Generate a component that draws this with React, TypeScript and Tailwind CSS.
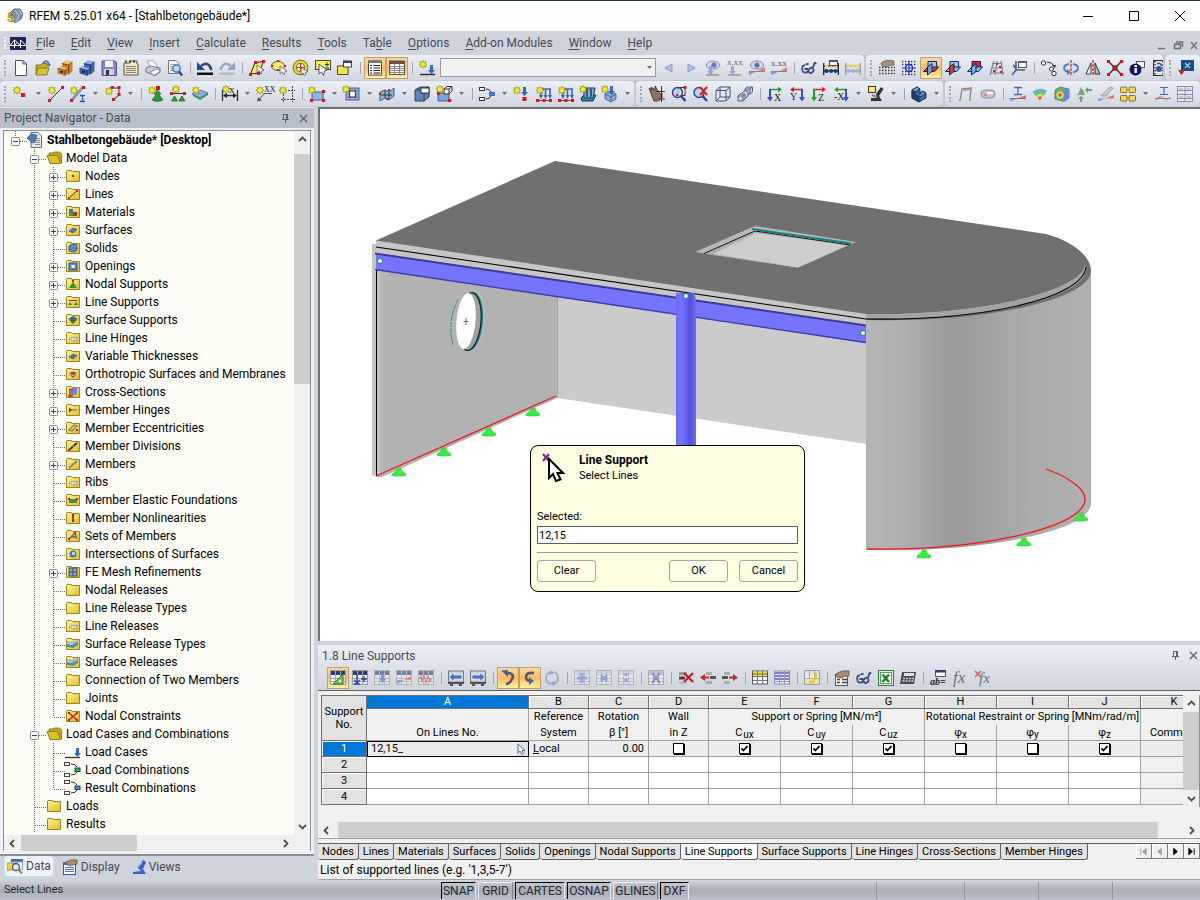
import { ReactNode } from "react";
import clsx from "clsx";

const UI = "font-['Roboto','Noto_Sans',sans-serif]";

/* ---------- icon primitives, all on a 16x16 grid ---------- */

interface LineProps {
  d: string;
  c?: string;
  w?: number;
  f?: string;
}
const L = ({ d, c = "#303030", w = 1, f = "none" }: LineProps) => (
  <path d={d} stroke={c} strokeWidth={w} fill={f} />
);

interface BoxProps {
  x: number;
  y: number;
  w?: number;
  h?: number;
  f?: string;
  c?: string;
}
const B = ({ x, y, w = 3, h, f = "#e0101c", c = "none" }: BoxProps) => (
  <rect x={x} y={y} width={w} height={h ?? w} fill={f} stroke={c} />
);

const Spark = ({ x = 0, y = 0 }: { x?: number; y?: number }) => (
  <g transform={`translate(${x} ${y})`}>
    <path
      d="M4 0.3 4.9 2.3 7 1.4 6.1 3.4 8 4.3 6 5.1 7 7.3 4.8 6.3 4 8.3 3.1 6.3 1 7.3 1.9 5.1 0 4.3 1.9 3.4 1 1.4 3.1 2.3Z"
      fill="#f8ee20"
      stroke="#8c8410"
      strokeWidth="0.6"
    />
  </g>
);

const Txt = ({
  x,
  y,
  s = 8,
  c = "#222",
  children,
}: {
  x: number;
  y: number;
  s?: number;
  c?: string;
  children: ReactNode;
}) => (
  <text x={x} y={y} fontSize={s} fill={c} fontFamily="Liberation Serif, serif">
    {children}
  </text>
);

const DownArrow = ({ x, y, c = "#3a66c8" }: { x: number; y: number; c?: string }) => (
  <path d={`M${x - 1} ${y}h3v5h2l-3.5 4-3.5-4h2z`} fill={c} />
);

const Glasses = ({ c = "#3c4a80" }: { c?: string }) => (
  <g>
    <L d="M4 5.5Q1 5 1.2 9T5 12.5Q8 12 7 8.5M3.5 9H7M8 11Q8 14 11 12.5T11.5 8Q9 7 8 10M11 8Q13 7 13 4Q14 2 15 4M5 5Q6 3 7.5 4.5" c={c} w={1.8} />
  </g>
);

const Sheet = ({ head = "#2c3f78" }: { head?: string }) => (
  <g>
    <B x={0.5} y={0.5} w={15} h={14} f="#eee" c="#9a9a9a" />
    <B x={1} y={1} w={14} h={4} f={head} />
    <L d="M1 8.5h14M1 11.5h14M5.5 1v13M10.5 1v13" c="#a8a8a8" />
  </g>
);

const Cabinet = ({ a, b, c }: { a: string; b: string; c: string }) => (
  <g>
    <path d="M5 3.5 9 0.5 15.5 2V11L12 14.500 5 12Z" fill={b} />
    <path d="M5 3.5 9 0.5 15.5 2 11.5 5Z" fill={a} />
    <path d="M0.5 8.500 4 6.5 11.5 8.5V14L7.5 15.8 0.5 13.500Z" fill={b} />
    <path d="M0.5 8.500 4 6.5 11.5 8.500 8 10.500Z" fill={a} />
    <L d="M0.5 8.500 8 10.500V15.5M5 3.5 11.500 5V8M11.500 5 15.5 2M8 10.500 11.500 8.500V13.500" c={c} w={0.9} />
    <B x={3} y={11} w={3} h={1.8} f="#222" />
  </g>
);

const Planes = ({ hot }: { hot: number }) => (
  <g stroke="#14206a" strokeWidth="1">
    <path d="M5 1.5H13.5V9.5H5Z" fill={hot === 2 ? "#e82018" : "#9cccf0"} />
    <path d="M0.5 11.5 5 7H15.5L11.5 11.5Z" fill={hot === 0 ? "#e03020" : "#8cc4ec"} />
    <path d="M4.5 7 9 3.5V11.5L4.5 15Z" fill={hot === 1 ? "#e03020" : "#6cb0e4"} fillOpacity="0.9" />
  </g>
);

const Abacus = ({ beads, frame }: { beads: string; frame: string }) => (
  <g>
    <L d="M0.7 3V15M15.3 3V15M1 6H15M1 11H15" c={frame} w={1.3} />
    {[3.5, 8, 12.5].map((x) => (
      <circle key={x} cx={x} cy={11} r={2.1} fill={beads} />
    ))}
    {[3.5, 8, 12.5].map((x) => (
      <circle key={x} cx={x} cy={6} r={1.9} fill="#e8d878" />
    ))}
  </g>
);

const Axis = ({ label, h, v, flip }: { label: string; h: string; v: string; flip?: boolean }) => (
  <g>
    {flip ? (
      <g>
        <L d="M4 3.5H14" c={h} w={1.6} />
        <path d="M1 3.5 5 .8V6.2Z" fill={h} />
        <L d="M13 3V12" c={v} w={2} />
        <path d="M10 11H16L13 15.5Z" fill={v} />
        <Txt x={1} y={13.5} s={10}>{label}</Txt>
      </g>
    ) : (
      <g>
        <L d="M2 3.5H11" c={h} w={1.6} />
        <path d="M15 3.5 11 .8V6.2Z" fill={h} />
        <L d="M3 3V12" c={v} w={2} />
        <path d="M0 11H6L3 15.5Z" fill={v} />
        <Txt x={7} y={14.5} s={10}>{label}</Txt>
      </g>
    )}
  </g>
);

const LoadFrame = () => (
  <g>
    <L d="M6 3H15M5 3V10M9.5 3V10M14 3V10" c="#3a66c8" w={1.6} />
    <path d="M3 9h4l-2 4zM7.5 9h4l-2 4zM12 9h4l-2 4z" fill="#3a66c8" />
    <L d="M1 14.5H15" c="#555" />
    <B x={0} y={13} />
    <B x={6.5} y={13} />
    <B x={13} y={13} />
    <Spark />
  </g>
);

const Panel4 = ({ f }: { f: string }) => (
  <g fill={f} stroke="#6a5a08" strokeWidth="0.8">
    <rect x="0.5" y="1" width="6.5" height="5.5" rx="1" />
    <rect x="9" y="1" width="6.5" height="5.5" rx="1" />
    <rect x="0.5" y="9.5" width="6.5" height="5.5" rx="1" />
    <rect x="9" y="9.5" width="6.5" height="5.5" rx="1" />
  </g>
);

const icons: Record<string, ReactNode> = {
  page: <path d="M2.5.5H10L13.5 4V15.5H2.5ZM10 .5V4H13.5" fill="#fff" stroke="#50525a" />,
  open: (
    <g>
      <path d="M1 5H6L7 3.5H12V14H1Z" fill="#c8b020" stroke="#7a6a10" strokeWidth=".8" />
      <path d="M3 8H14L12 15H1Z" fill="#d8c438" stroke="#7a6a10" strokeWidth=".8" />
      <L d="M8 3Q12 -1 14 4" c="#4a78b8" w={1.8} />
      <path d="M11.5 4H16L14 7Z" fill="#4a78b8" />
    </g>
  ),
  cabinet: <Cabinet a="#f0c070" b="#c88030" c="#6a3c08" />,
  cabinetBlue: <Cabinet a="#90b0e8" b="#3c64b0" c="#182c60" />,
  save: (
    <g>
      <path d="M1 1H14L15.5 2.5V15.5H1Z" fill="#8484cc" stroke="#5050a0" />
      <B x={4} y={1} w={8} h={6} f="#f4f4fa" />
      <B x={3} y={9} w={10} h={6} f="#cfcfd8" />
      <B x={5} y={10} w={3} h={5} f="#333" />
    </g>
  ),
  notes: (
    <g>
      <path d="M1 3H7V1H14V4H15V15H1Z" fill="#f0e8c8" stroke="#5a5240" />
      <L d="M3 6.5H13M3 8.5H13M3 10.5H13M3 12.5H13" c="#8a8270" />
      <path d="M2 1.5h2M6 1.5h2M10 1.5h2" stroke="#444" strokeWidth="2" />
    </g>
  ),
  print: (
    <g>
      <path d="M2 1 8 0.5 13 7 6 8Z" fill="#fff" stroke="#888" strokeWidth=".7" />
      <path d="M1 8 5 6 15 8V12L10 15.5 1 12Z" fill="#c4cade" stroke="#5a6070" strokeWidth=".8" />
      <path d="M5 12 12 9 15.5 11 9 15.5Z" fill="#fff" stroke="#7078a0" strokeWidth=".8" />
    </g>
  ),
  preview: (
    <g>
      <path d="M1.5.5H9L12 3.5V13.5H1.5Z" fill="#f6f6f6" stroke="#777" />
      <L d="M3 4.5h6M3 6.5h5M3 8.5h4M3 10.5h4" c="#aaa" />
      <circle cx="9.5" cy="8.5" r="3.7" fill="#b8d8f8" stroke="#4468a8" strokeWidth="1.3" />
      <L d="M12 11.5 15 15.5" c="#2c4c98" w={2.4} />
    </g>
  ),
  undo: (
    <g>
      <L d="M4 6Q11 0 14.5 10" c="#284878" w={2.6} />
      <path d="M0 2V10H8Z" fill="#284878" />
      <B x={0} y={12.5} w={16} h={2.5} f="#101010" />
    </g>
  ),
  redo: (
    <g>
      <L d="M12 6Q5 0 1.5 10" c="#98a4bc" w={2.4} />
      <path d="M16 2V10H8Z" fill="#98a4bc" />
      <B x={0} y={12.5} w={16} h={2.5} f="#b4bac8" />
    </g>
  ),
  selPlane: (
    <g>
      <L d="M1.5 14 6 2.500 14.5 1.5 10 13Z" c="#222" f="#f8e858" />
      <B x={5} y={1} /><B x={13} y={0} /><B x={0} y={13} /><B x={8} y={12} />
      <path d="M8 5V13L10 11 12 14 13 10.5 15 10Z" fill="#fff" stroke="#444" strokeWidth=".7" />
    </g>
  ),
  selEllipse: (
    <g>
      <ellipse cx="7" cy="6" rx="6.5" ry="4.5" fill="#f8ec70" stroke="#554" />
      <B x={6} y={0} w={2} /><B x={0} y={5} w={2} /><B x={6} y={9} w={2} /><B x={13} y={5} w={2} />
      <path d="M9 6V14L11 12 13 15 14 11.5 16 11Z" fill="#eee" stroke="#555" strokeWidth=".7" />
    </g>
  ),
  selRing: (
    <g>
      <circle cx="7.5" cy="7.5" r="6" fill="none" stroke="#f0d800" strokeWidth="2.6" />
      <circle cx="7.5" cy="7.5" r="7.4" fill="none" stroke="#554a00" strokeWidth=".8" />
      <circle cx="7.5" cy="7.5" r="4.2" fill="#fff" stroke="#443c00" strokeWidth=".8" />
      <L d="M7.500 4V11M4 7.5H11" c="#e02020" />
      <path d="M8 8V15L10 13 12 15.500 13 12 15 11.5Z" fill="#eee" stroke="#555" strokeWidth=".7" />
    </g>
  ),
  selRect: (
    <g>
      <B x={0.5} y={0.5} w={15} h={9} f="#f8ec60" c="#444" />
      <L d="M10 4.5h4M12 2.5v4M10 8h4" />
      <path d="M4 4V14L6.5 12 8.5 15.5 9.5 11 12 10Z" fill="#fff" stroke="#333" strokeWidth=".8" />
    </g>
  ),
  window: (
    <g>
      <path d="M0.5 6H5L6 5H11V14.5H0.5Z" fill="#f4e448" stroke="#444" />
      <B x={6.5} y={1} w={8} h={6} f="#fff" c="#30406a" />
      <B x={7} y={1} w={8} h={2} f="#30406a" />
    </g>
  ),
  list: (
    <g>
      <B x={1.5} y={1} w={13} h={14} f="#fff" c="#444" />
      <B x={1} y={0.5} w={14} h={2.5} f="#777" />
      <L d="M3 5.5h2M3 8h2M3 10.5h2M3 13h2M6.5 5.5h6.5M6.5 8h6.5M6.5 10.5h6.5M6.5 13h6.5" c="#222" w={1.2} />
    </g>
  ),
  table: (
    <g>
      <B x={0.5} y={1} w={15} h={13.5} f="#fff" c="#555" />
      <B x={0.5} y={1} w={15} h={3} f="#6a5040" />
      <L d="M1 6.5h14M1 8.5h14M1 10.5h14M1 12.5h14M5.5 4v10M10.5 4v10" c="#8a8a8a" />
    </g>
  ),
  newLoad: (
    <g>
      <Spark />
      <DownArrow x={12} y={5} />
      <L d="M1 14.5H16" w={1.6} />
    </g>
  ),
  prev: <path d="M11 4V12L4 8Z" fill="#b0c0ec" stroke="#8498cc" />,
  next: <path d="M5 4V12L12 8Z" fill="#b0c0ec" stroke="#8498cc" />,
  showLoads: (
    <g>
      <ellipse cx="8" cy="5" rx="6.5" ry="4" fill="#d8dcea" stroke="#8088a8" />
      <circle cx="9" cy="5" r="2.6" fill="#6878b8" />
      <DownArrow x={5} y={6} c="#90a4d8" />
      <L d="M1 15H14" c="#999" w={1.3} />
    </g>
  ),
  loadValues: (
    <g>
      <Txt x={0} y={5} s={9} c="#666">x.xx</Txt>
      <DownArrow x={5} y={6} c="#98a8d8" />
      <L d="M1 15H14" c="#999" w={1.3} />
    </g>
  ),
  showResults: (
    <g>
      <ellipse cx="8" cy="5" rx="6.5" ry="4" fill="#d8dcea" stroke="#8088a8" />
      <circle cx="8" cy="5" r="2.6" fill="#5878b0" />
      <path d="M0 15V11L8 11.5Z" fill="#8890e0" />
      <path d="M16 7V11.5L8 11.5Z" fill="#e88080" />
      <L d="M0 11.5H16" c="#888" />
    </g>
  ),
  resultValues: (
    <g>
      <Txt x={0} y={6} s={9} c="#555">x.xx</Txt>
      <path d="M0 15V11L8 11.5Z" fill="#8890e0" />
      <path d="M16 7V11.5L8 11.5Z" fill="#e88080" />
      <L d="M0 11.5H16" c="#888" />
    </g>
  ),
  glasses: <Glasses />,
  abacus: (
    <g>
      <Abacus beads="#203880" frame="#222" />
      <B x={6.5} y={0.5} w={8} h={5} f="#fff" c="#444" />
      <B x={6} y={0} w={9} h={2} f="#555" />
    </g>
  ),
  abacusOff: <Abacus beads="#a4aed0" frame="#9a9a9a" />,
  grid: (
    <g>
      <path d="M0 7.5H16M0 10.5H16M0 13.5H16" stroke="#333" strokeWidth="1.5" strokeDasharray="1.5 1.5" />
      <path d="M2 3Q7 -1 15 1V5Q9 5 8 7L3 6Z" fill="#a89078" stroke="#58483a" strokeWidth=".7" />
    </g>
  ),
  snap: (
    <g>
      <path d="M1 1.5H16M1 4.5H16M1 11.5H16M1 14.5H16" stroke="#333" strokeWidth="1.3" strokeDasharray="1.3 1.7" />
      <circle cx="8" cy="8" r="3.5" fill="#fff" stroke="#2030d0" strokeWidth="1.4" />
      <L d="M8 1V15M1 8H15" c="#2030d0" w={1.2} />
    </g>
  ),
  planeXY: <Planes hot={0} />,
  planeYZ: <Planes hot={1} />,
  planeXZ: <Planes hot={2} />,
  gridLines: (
    <g>
      <L d="M5 1 1 15M8 1 6 15M12 1 14 15M3 3.500H13M2 8H14M1 13H15" c="#7884a0" w={1.2} />
      <B x={7} y={3} w={2} /><B x={4} y={10} w={2} /><B x={10} y={6} w={2} /><B x={11} y={11} w={2} />
    </g>
  ),
  axes: (
    <g>
      <L d="M5 1V10M5 10 1 15M5 10H14M2 5Q5 7 5 10" c="#4a5c90" w={1.6} />
      <B x={7.5} y={1.5} w={8} h={6} f="#fff" c="#555" />
      <B x={7} y={1} w={9} h={2} f="#556" />
    </g>
  ),
  copy: (
    <g>
      <circle cx="2.5" cy="3" r="2.2" fill="#fff" stroke="#333" />
      <circle cx="10.5" cy="9" r="2" fill="#fff" stroke="#333" />
      <circle cx="13" cy="13.5" r="2.2" fill="#fff" stroke="#333" />
      <L d="M6 2Q11 2 13 6" />
      <path d="M11 5h4l-1 3z" fill="#333" />
    </g>
  ),
  rotate: (
    <g>
      <path d="M8 0V16" stroke="#e02020" strokeDasharray="3 1" strokeWidth="1.3" />
      <L d="M6 4Q1 5 1 8T5 12M10 4Q15 5 15 8T10 12.500" c="#4a78c0" w={1.8} />
      <path d="M4 9V15L8 12Z" fill="#4a78c0" />
    </g>
  ),
  mirror: (
    <g>
      <path d="M8 0V16" stroke="#e02020" strokeDasharray="3 1" strokeWidth="1.3" />
      <path d="M6 3V14H1Z" fill="#fff" stroke="#333" />
      <path d="M10 3V14H15Z" fill="#bbb" stroke="#333" />
    </g>
  ),
  nodesX: (
    <g>
      <L d="M2 2 14 14M14 2 2 14" c="#222" w={1.3} />
      <B x={0} y={0} /><B x={13} y={0} /><B x={0} y={13} /><B x={13} y={13} />
      <circle cx="8" cy="8" r="2.4" fill="#e0101c" stroke="#600" strokeWidth=".6" />
    </g>
  ),
  info: (
    <g>
      <B x={7.5} y={1.5} w={8} h={6} f="#fff" c="#555" />
      <circle cx="6.5" cy="9.5" r="6" fill="#101860" />
      <B x={5.5} y={8} w={2.4} h={5} f="#fff" />
      <B x={5.5} y={5} w={2.4} h={2} f="#fff" />
    </g>
  ),
  film: (
    <g>
      <B x={2.5} y={0.5} w={10} h={15} f="#e8e8e8" c="#333" />
      <path d="M4 1V15M12 1V15" stroke="#333" strokeWidth="1.5" strokeDasharray="1.5 1.5" />
      <circle cx="8" cy="9" r="3" fill="#3050a0" />
      <L d="M6 4Q9 2 11 6" c="#3050a0" w={1.5} />
    </g>
  ),
  module: (
    <g>
      <B x={3} y={0} w={13} h={11} f="#184c88" />
      <L d="M7 3 12 8M12 3 7 8" c="#a8d0f0" w={1.3} />
      <path d="M0 10H7L3.5 15Z" fill="#d02020" />
    </g>
  ),
  moduleCut: <path d="M4 15 9 2V15Z" fill="#d02020" />,

  node: (
    <g>
      <Spark y={0} />
      <B x={8} y={7} w={4} />
    </g>
  ),
  line: (
    <g>
      <L d="M2 14 14 2" />
      <B x={13} y={0} /><B x={0} y={13} />
      <Spark x={0} />
    </g>
  ),
  member: (
    <g>
      <L d="M2 14 13 1" c="#7c9cc8" w={2.8} />
      <B x={12} y={0} /><B x={0} y={13} />
      <Spark x={0} y={0} />
      <L d="M10 9.500h5M12.5 9.5v6M10 15.5h5" c="#3058b0" w={1.3} />
    </g>
  ),
  polyline: (
    <g>
      <L d="M5 2H14V9L8 14" c="#333" />
      <B x={6} y={0} /><B x={12.5} y={0} /><B x={12.5} y={7} /><B x={7} y={12} />
      <Spark x={0} y={1} />
    </g>
  ),
  nodalSupport: (
    <g>
      <B x={8} y={0} w={4} />
      <path d="M9.5 4 13 8 11 9 15 14Q9 17 4 14L8 9 6 8Z" fill="#2c9c3c" stroke="#14601c" strokeWidth=".7" />
      <Spark />
    </g>
  ),
  lineSupport: (
    <g>
      <L d="M2 7.5H15" />
      <B x={13} y={6} /><B x={0} y={6} />
      <path d="M4.5 10 7.5 15H1.5ZM12 10 15 15H9Z" fill="#2c9c3c" stroke="#14601c" strokeWidth=".7" />
      <Spark x={2} y={-1} />
    </g>
  ),
  surface: (
    <g>
      <path d="M1 10 8 14 16 9V7L8 11 1 8Z" fill="#38a048" />
      <path d="M0 8 9 4 16 7 8 12Z" fill="#80b0e8" stroke="#3868a8" strokeWidth=".7" />
      <Spark />
    </g>
  ),
  dimension: (
    <g>
      <Spark x={0} y={-1} />
      <L d="M0.5 4V15M15.5 4V15M2 9.5H14" w={1.3} />
      <path d="M1 9.5 5 7V12ZM15 9.5 11 7V12Z" fill="#222" />
      <Txt x={7} y={7} s={11}>x</Txt>
    </g>
  ),
  comment: (
    <g>
      <Txt x={7} y={6} s={8}>XX</Txt>
      <L d="M15 7.5H7L2 14" c="#555" />
      <path d="M0 15.5 1 11 5 14.5Z" fill="#555" />
      <Spark x={-1} />
    </g>
  ),
  guides: (
    <g>
      <path d="M4.5 2V16M13.5 0V16M0 4.5H16M2 13.5H16" stroke="#444" strokeDasharray="2 1" fill="none" />
      <Spark />
    </g>
  ),
  rectSurface: (
    <g>
      <B x={3} y={6} w={11} h={8} f="#8cb4e8" c="#3c64a0" />
      <B x={1} y={13} /><B x={13} y={13} /><B x={13} y={4} />
      <Spark x={-1} />
    </g>
  ),
  opening: (
    <g>
      <B x={2} y={2} w={13} h={12} f="#84aee0" c="#3c64a0" />
      <B x={5.5} y={5} w={6} h={6} f="#fff" c="#333" />
      <B x={4.5} y={4} w={2} /><B x={10.5} y={4} w={2} /><B x={4.5} y={10} w={2} /><B x={10.5} y={10} w={2} />
      <Spark x={-2} y={-1} />
    </g>
  ),
  foldSurface: (
    <g>
      <path d="M1 6 6 4V12L1 15ZM6 4 10 6V14L6 12ZM10 6 15 2V10L10 14Z" fill="#8cb4d8" stroke="#386088" />
      <B x={9} y={3} w={2} /><B x={7} y={12} w={2} /><B x={0} y={7} w={2} />
      <L d="M2 9H13" c="#333" />
    </g>
  ),
  solid: (
    <g>
      <path d="M1 4 6 1H15V11L10 15H1Z" fill="#5c84b8" stroke="#2c4468" />
      <path d="M1 4H10V15M10 4 15 1" fill="none" stroke="#2c4468" />
      <B x={7} y={2} w={8} h={5} f="#fff" c="#333" />
    </g>
  ),
  block: (
    <g>
      <B x={2} y={7} w={11} h={8} f="#78a4dc" c="#385c98" />
      <path d="M8 3 11 .5H16V5L13 8H8ZM8 3H13V8M13 3 16 .5" fill="#eee" stroke="#333" />
      <B x={1} y={6} /><B x={12} y={13} />
      <Spark x={0} y={-1} />
    </g>
  ),
  combo: (
    <g>
      <B x={0.5} y={1.5} w={5} h={3} f="#fff" c="#333" />
      <B x={0.5} y={11.5} w={5} h={3} f="#fff" c="#333" />
      <L d="M7 3Q11 3 12 6M7 13Q11 13 12 10" />
      <B x={10} y={6} w={6} h={4} f="#3c78d0" />
    </g>
  ),
  pointLoad: (
    <g>
      <Spark x={-1} />
      <DownArrow x={10} y={1} />
      <B x={8.5} y={11} w={4} />
    </g>
  ),
  lineLoad: <LoadFrame />,
  memberLoad: <LoadFrame />,
  surfaceLoad: (
    <g>
      <path d="M1 12 4 9H16L13 15H2Z" fill="#2c8898" stroke="#183848" />
      <path d="M4 2H15L13 12H4Z" fill="#74b0d8" stroke="#203858" />
      <L d="M7 3V11M11 3V11" c="#203858" w={1.5} />
      <Spark x={-1} y={-1} />
    </g>
  ),
  solidLoad: (
    <g>
      <path d="M3 8 8 5 14 8V13L9 16 3 13Z" fill="#88a8d8" stroke="#385888" strokeWidth=".8" />
      <path d="M3 8 9 11 14 8M9 11V16" fill="none" stroke="#385888" strokeWidth=".8" />
      <DownArrow x={9} y={0} />
      <Spark x={-1} y={-1} />
    </g>
  ),
  pan: (
    <g>
      <path d="M0 2 3 4 2 1 6 4 6 0 9 5 11 8 13 7 13 12 9 15 5 15 3 10Z" fill="#8c7460" stroke="#3c3028" strokeWidth=".9" />
      <L d="M12.5 0V16M7 5.5H16M10 13H16" c="#333" />
    </g>
  ),
  zoomWindow: (
    <g>
      <B x={7} y={1.5} w={7} h={8} f="#fff" c="#333" />
      <circle cx="6.5" cy="6.5" r="5" fill="#b8d0f4" fillOpacity=".8" stroke="#2c3c90" strokeWidth="1.4" />
      <L d="M10 10 14.5 15" c="#2c3c90" w={2.4} />
      <B x={12.5} y={0} /><B x={5} y={8} w={2} />
    </g>
  ),
  zoomOff: (
    <g>
      <circle cx="6" cy="6.5" r="5" fill="#b8d0f4" stroke="#2c3c90" strokeWidth="1.4" />
      <L d="M9.5 10 14 15" c="#2c3c90" w={2.4} />
      <L d="M7 1 14 9M14 1 7 9" c="#d82020" w={2} />
    </g>
  ),
  cube: <path d="M1 4.5 5 1H15V11L11 15H1ZM1 4.5H11V15M11 4.5 15 1M5 1V11H15M5 11 1 15" fill="#e4e8f4" stroke="#445078" />,
  cubes: (
    <g fill="#ccd2e4" stroke="#5a6484">
      <path d="M8 3 10 1H15.5V6L13 8H8ZM8 3H13V8M13 3 15 1" />
      <path d="M5 7 7 5H11V10L9 12H5Z" />
      <path d="M1 10 3 8H8V13L6 15H1ZM1 10H6V15M6 10 8 8" />
    </g>
  ),
  viewX: <Axis label="X" h="#20a020" v="#3050d0" />,
  viewY: <Axis label="Y" h="#d02020" v="#3050d0" flip />,
  viewZ: <Axis label="Z" h="#d02020" v="#20a020" />,
  viewNegX: <Axis label="-X" h="#20a020" v="#3050d0" flip />,
  render: (
    <g>
      <path d="M8 8 13 1 15.5 3 11 10 14 15H3V12L9 12Z" fill="#333" />
      <path d="M4 9 9 11" stroke="#888" strokeWidth="2" />
      <B x={0.5} y={0.5} w={7} h={6} f="#f8f060" c="#333" />
    </g>
  ),
  solidView: (
    <g stroke="#142c50" strokeWidth=".9">
      <path d="M1 4 6 1 9 3V7L12 5 15 7V12L8 16 1 12Z" fill="#386898" />
      <path d="M1 4 4 6V9L8 11V16L1 12Z" fill="#203c64" />
      <path d="M1 4 6 1 9 3 4 6Z" fill="#70a0cc" />
      <path d="M8 9.500 12 5 15 7 9 11Z" fill="#70a0cc" />
    </g>
  ),
  deformed: (
    <g>
      <L d="M2 15 4 3 13 2 12 14" c="#888" w={1.4} />
      <L d="M4 3Q8 6 13 2" c="#d06060" />
      <B x={3} y={2} f="#d88" w={2} /><B x={12} y={1} f="#d88" w={2} /><B x={1} y={13} f="#4c8" w={2} /><B x={11} y={13} f="#4c8" w={2} />
    </g>
  ),
  gadget: (
    <g>
      <rect x="1" y="4" width="14" height="8" rx="4" fill="#c4c4c8" stroke="#8c8c90" />
      <B x={7} y={6} w={6} h={2} f="#fff" />
      <B x={4} y={8} w={3} h={2} f="#d88" />
    </g>
  ),
  diagram: (
    <g>
      <L d="M4 1.5h8M8 1.5v7M4 8.5h8" c="#5068b0" w={1.3} />
      <path d="M0 15V12.5H9Z" fill="#8890e0" />
      <path d="M16 9V12.5H7Z" fill="#e07070" />
      <L d="M0 12.5H16" c="#777" />
    </g>
  ),
  isoSurface: (
    <g>
      <path d="M0.500 6Q8 0 15 5L8 14Z" fill="#60b0d8" />
      <path d="M2 8Q8 3 13.500 7L8 14Z" fill="#60c870" />
      <path d="M4 10Q8 6 11.500 9.500L8 14Z" fill="#e8e050" />
      <path d="M6 12Q8 9.500 10 11.500L8 14Z" fill="#e85030" />
    </g>
  ),
  isoSolid: (
    <g>
      <path d="M1 4 6 1 15 3V12L10 15.5 1 13Z" fill="#60b870" stroke="#557" strokeWidth=".7" />
      <circle cx="6" cy="9" r="3.5" fill="#e8e050" />
      <circle cx="6" cy="9" r="1.8" fill="#e85030" />
      <path d="M10 5 15 3V12L10 15.5Z" fill="#6088d8" />
    </g>
  ),
  reactions: (
    <g>
      <path d="M5 1 8 6 9 9H1L3 6Z" fill="#70b078" />
      <path d="M5 10 8 13H6V16H4V13H2Z" fill="#60a868" />
      <path d="M9 4 12 1V3H16V5H12V7Z" fill="#60a868" />
    </g>
  ),
  section: (
    <g>
      <path d="M3 10 12 1 15 2 8 10Z" fill="#c8ccd8" stroke="#808898" strokeWidth=".7" />
      <path d="M0 15V12.5H8Z" fill="#8890e0" />
      <path d="M16 9V12.5H7Z" fill="#e07070" />
    </g>
  ),
  panels: <Panel4 f="#f0d858" />,
  diagramSmooth: (
    <g>
      <L d="M5 1.5h8M9 1.5v7M5 8.5h8" c="#5068b0" w={1.2} />
      <L d="M1 14Q4 9 8 12T15 11" c="#d05060" />
      <L d="M0 12.5H16" c="#888" />
    </g>
  ),
  resultTable: (
    <g>
      <B x={0.5} y={0.5} w={15} h={15} f="#e4e8f4" c="#8890b0" />
      <L d="M1 4.5h14M1 8.5h14M1 12.5h14M8 1v14" c="#8890b0" />
      <L d="M2 3h4M10 3h4M2 11h4M10 11h4" c="#d09090" />
    </g>
  ),

  sheetEdit: (
    <g>
      <Sheet />
      <path d="M3 14 13 4V14Z" fill="#70c860" stroke="#208020" />
      <B x={9} y={10} w={2} f="#fff" />
    </g>
  ),
  sheetInsert: (
    <g>
      <Sheet />
      <L d="M5 5V13M2 10 5 13 8 10M9 9H15M12 6V12M2 14H8" c="#2848a8" w={1.5} />
    </g>
  ),
  sheetLoad: (
    <g opacity=".6">
      <Sheet />
      <DownArrow x={8} y={4} c="#4868c0" />
    </g>
  ),
  sheetDiagram: (
    <g opacity=".6">
      <Sheet />
      <path d="M1 14V10H8Z" fill="#6070e0" />
      <path d="M15 6V10H8Z" fill="#e05050" />
    </g>
  ),
  sheetWave: (
    <g opacity=".6">
      <Sheet />
      <L d="M1 9 3 6 4 12 6 5 8 13 10 6 12 11 14 8" c="#e04040" w={1.2} />
    </g>
  ),
  sheetPrev: (
    <g>
      <B x={0.5} y={1} w={15} h={11} f="#d0d4dc" c="#777" />
      <path d="M0 12H16V14H0ZM2 14h3v2H2zM11 14h3v2h-3z" fill="#555" />
      <path d="M1 7 6 2.5V5H14V9H6V11.5Z" fill="#4870d0" stroke="#fff" strokeWidth=".6" />
    </g>
  ),
  sheetNext: (
    <g>
      <B x={0.5} y={1} w={15} h={11} f="#d0d4dc" c="#777" />
      <path d="M0 12H16V14H0ZM2 14h3v2H2zM11 14h3v2h-3z" fill="#555" />
      <path d="M15 7 10 2.5V5H2V9H10V11.5Z" fill="#4870d0" stroke="#fff" strokeWidth=".6" />
    </g>
  ),
  syncOut: (
    <g>
      <L d="M7 3Q14 3 12.500 8Q11 13 6 14" c="#505868" w={2.6} />
      <path d="M1 0.500 8 0V7Z" fill="#3868c0" />
    </g>
  ),
  syncIn: (
    <g>
      <L d="M12 3Q4 2 4 7Q4 11 9 11" c="#505868" w={2.6} />
      <path d="M7 7 12 11 7 15Z" fill="#3868c0" />
    </g>
  ),
  sync: (
    <g opacity=".7">
      <L d="M7 2Q2 3 2 8T7 14M9 2Q14 3 14 8T9 14" c="#98a4bc" w={2.2} />
      <path d="M6 0 10 3 5 5ZM10 16 6 13 11 11Z" fill="#7090d0" />
    </g>
  ),
  addRow: (
    <g opacity=".6">
      <Sheet head="#c8ccd8" />
      <path d="M6.5 3h3v3.5H13v3H9.5V13h-3V9.5H3v-3h3.5z" fill="#6888d8" />
    </g>
  ),
  mulRow: (
    <g opacity=".6">
      <Sheet head="#c8ccd8" />
      <L d="M5 5 11 11M11 5 5 11M4.5 8h7" c="#6080d8" w={2.4} />
    </g>
  ),
  divRow: (
    <g opacity=".6">
      <Sheet head="#c8ccd8" />
      <B x={6.5} y={3} w={3} f="#6080d8" /><B x={6.5} y={9} w={3} f="#6080d8" />
    </g>
  ),
  clearRow: (
    <g opacity=".7">
      <Sheet head="#b0b4c4" />
      <L d="M4 3 12 13M12 3 4 13" c="#5870b0" w={2} />
    </g>
  ),
  deleteRow: (
    <g>
      <B x={1} y={2} w={8} h={3} f="#999" /><B x={1} y={6.5} w={6} h={3} f="#444" /><B x={1} y={11} w={8} h={3} f="#bbb" />
      <L d="M6 3 15 12M15 3 6 12" c="#c82020" w={2.2} />
    </g>
  ),
  rowLeft: (
    <g>
      <B x={6} y={2} w={6} h={3} f="#aaa" /><B x={10} y={6} w={6} h={3} f="#555" /><B x={6} y={11} w={6} h={3} f="#aaa" />
      <path d="M0 7.5 5 4V6.5H9V8.5H5V11Z" fill="#c82828" />
    </g>
  ),
  rowRight: (
    <g>
      <B x={2} y={2} w={6} h={3} f="#aaa" /><B x={0} y={6} w={6} h={3} f="#555" /><B x={2} y={11} w={6} h={3} f="#aaa" />
      <path d="M16 7.5 11 4V6.5H7V8.5H11V11Z" fill="#c82828" />
    </g>
  ),
  yellowTable: (
    <g>
      <B x={0.5} y={1} w={15} h={13} f="#fff" c="#555" />
      <B x={1} y={1.5} w={14} h={5} f="#e8e030" />
      <L d="M1 6.5h14M1 10.5h14M5.5 1v13M10.5 1v13M1 4h14" c="#777" />
    </g>
  ),
  blueTable: (
    <g>
      <B x={0.5} y={1} w={15} h={13} f="#f0f0ff" c="#8888b8" />
      <L d="M1 3h14M1 6h14M1 9h14" c="#5858c8" w={1.6} />
      <L d="M5.5 1v13M10.5 1v13M1 11.5h14" c="#9898c0" />
    </g>
  ),
  highlight: (
    <g>
      <Sheet head="#e4e4e4" />
      <B x={1} y={9} w={14} h={5} f="#e8e4b0" />
      <L d="M5 12H9L12 6Q12 3 10 2" c="#e0c838" w={2.5} />
    </g>
  ),
  settings: (
    <g>
      <B x={1.5} y={4.5} w={12} h={11} f="#f4f4f4" c="#555" />
      <L d="M3 9.5h3M8 9.5h5M3 12.5h3M8 12.5h5" c="#444" w={1.4} />
      <path d="M2 4Q7 0 15 1V6Q9 6 8 8L3 7Z" fill="#a88c70" stroke="#58483a" strokeWidth=".7" />
    </g>
  ),
  excel: (
    <g>
      <B x={0.5} y={0.5} w={15} h={15} f="#e8f4e4" c="#2c7c34" />
      <B x={2.5} y={2.5} w={11} h={11} f="#fff" c="#50a058" />
      <L d="M4.5 4.5 11 12M11 4.5 4.5 12" c="#1c7c2c" w={2.4} />
    </g>
  ),
  calc: (
    <g>
      <path d="M2 2H16L14 14H0Z" fill="#484c54" />
      <B x={4} y={3} w={10} h={3} f="#e0e4dc" />
      <path d="M3 8.500H14M2.500 11H14" stroke="#c8d0f0" strokeWidth="1.3" strokeDasharray="2 1" />
    </g>
  ),
  rename: (
    <g>
      <B x={5.5} y={0.5} w={10} h={6} f="#fff" c="#556" />
      <B x={5} y={0} w={11} h={2.5} f="#30406a" />
      <text x="0" y="15" fontSize="10" fontWeight="bold" fontStyle="italic" fontFamily="Liberation Serif, serif" fill="#222">ab=</text>
    </g>
  ),
  fx: (
    <text x="1" y="13" fontSize="17" fontStyle="italic" fontFamily="Liberation Serif, serif" fill="#6a6e78">fx</text>
  ),
  fxOff: (
    <g>
      <text x="5" y="13" fontSize="15" fontStyle="italic" fontFamily="Liberation Serif, serif" fill="#6a6e78">fx</text>
      <L d="M1 1 7 7M7 1 1 7" c="#d06060" w={1.6} />
    </g>
  ),
};

const Icon = ({ name }: { name: string }) => (
  <svg className="size-4 shrink-0 overflow-visible" viewBox="0 0 16 16" aria-hidden="true">
    {icons[name]}
  </svg>
);

/* ---------- tool bars ---------- */

const Tools = ({ items, active = [] }: { items: string[]; active?: string[] }) => (
  <>
    {items.map((item, i) => {
      if (item === "|")
        return (
          <span key={i} className="flex w-2 shrink-0 justify-center">
            <span className="h-3 border-l border-[#a2a6b0]" />
          </span>
        );
      if (item === "v")
        return (
          <button key={i} type="button" aria-label="More" className="flex h-[22px] w-[13px] shrink-0 items-center justify-center">
            <svg className="h-[3px] w-[5px]" viewBox="0 0 5 3"><path d="M0 0H5L2.5 3Z" fill="#6a6e78" /></svg>
          </button>
        );
      return (
        <button
          key={i}
          type="button"
          aria-label={item}
          className={clsx(
            "flex h-[22px] w-[22px] shrink-0 items-center justify-center",
            active.includes(item) &&
              "border border-[#c2a06a] bg-linear-to-b from-[#fbd9a0] via-[#fdbb62] to-[#fff0a0]"
          )}
        >
          <Icon name={item} />
        </button>
      );
    })}
  </>
);

const ToolBar = ({ children, className }: { children: ReactNode; className?: string }) => (
  <div className={clsx("flex h-[25px] items-center overflow-hidden rounded-sm bg-linear-to-b from-[#eceff7] to-[#d2d6e0]", className)}>
    <span className="ml-[4px] mr-[4px] h-4 w-[2px] shrink-0 border-l-2 border-dotted border-[#a4a8b2]" />
    {children}
  </div>
);

const menus: [string, string, string][] = [
  ["", "F", "ile"],
  ["", "E", "dit"],
  ["", "V", "iew"],
  ["", "I", "nsert"],
  ["", "C", "alculate"],
  ["", "R", "esults"],
  ["", "T", "ools"],
  ["Ta", "b", "le"],
  ["", "O", "ptions"],
  ["", "A", "dd-on Modules"],
  ["", "W", "indow"],
  ["", "H", "elp"],
];

const TitleBar = () => (
  <header className="flex h-[31px] shrink-0 items-center border-t border-[#22384d] bg-white">
    <svg className="ml-[7px] size-4" viewBox="0 0 16 16" aria-hidden="true">
      <path d="M3 5 7 1 13 1 16 6 14 11 8 15 4 10Z" fill="#7890b0" stroke="#48607c" strokeWidth=".8" />
      <path d="M8 2 12 8 9 14M12 2 15 7" fill="none" stroke="#c4d0e0" />
      <text x="0" y="14" fontSize="13" fontWeight="bold" fontFamily="Roboto, sans-serif" fill="#f4c818" stroke="#5c4c08" strokeWidth=".4">5</text>
    </svg>
    <h1 className="ml-[6px] flex-1 text-[12px]">RFEM 5.25.01 x64 - [Stahlbetongebäude*]</h1>
    <div className="-mr-[3px] flex h-full">
      {["M0 5.5H10", "M.5.5H9.5V9.5H.5Z", "M0 0 10 10M10 0 0 10"].map((d, i) => (
        <button key={d} type="button" aria-label={["Minimize", "Maximize", "Close"][i]} className="flex h-full w-[46px] items-center justify-center">
          <svg className="size-[10px] overflow-visible" viewBox="0 0 10 10"><path d={d} fill="none" stroke="#000" /></svg>
        </button>
      ))}
    </div>
  </header>
);

const MenuBar = () => (
  <nav className="flex h-6 shrink-0 items-center bg-[#cfd3dc] text-[12px] text-[#454a55]">
    <span className="ml-[4px] h-3 border-l-2 border-dotted border-[#f4f6fa]" />
    <svg className="ml-1 h-[13px] w-4" viewBox="0 0 16 13" aria-hidden="true">
      <rect width="16" height="13" fill="#1c2460" />
      <path d="M0 8.500H16M4.500 3V11M10.500 3V11M4.500 3 0 8.500M4.500 3 10.500 8.500M10.500 3 16 8.500M4.500 8.500 7 5.500" stroke="#fff" fill="none" />
    </svg>
    <div className="flex flex-1 gap-4 pl-[10px]">
      {menus.map(([a, b, c]) => (
        <button key={b + c} type="button">
          {a}
          <u className="underline-offset-2">{b}</u>
          {c}
        </button>
      ))}
    </div>
    <div className="flex gap-2 pr-[2px] pt-1">
      {["M0 7.5H7", "M2 1H8.5V6M.5 3.5H6.5V7.5H.5ZM.5 3H7", "M1 1 7 8M7 1 1 8"].map((d, i) => (
        <button key={d} type="button" aria-label={["Minimize window", "Restore window", "Close window"][i]}>
          <svg className="size-2 overflow-visible" viewBox="0 0 8 8"><path d={d} fill="none" stroke="#6c7078" strokeWidth={1.5} /></svg>
        </button>
      ))}
    </div>
  </nav>
);

const ToolRows = () => (
  <div className="shrink-0 bg-[#c4c8d2]">
    <div className="flex h-[26px] gap-[2px] overflow-hidden">
      <ToolBar>
        <Tools
          items={["page", "open", "cabinet", "cabinetBlue", "save", "notes", "print", "preview", "|", "undo", "redo", "|", "selPlane", "selEllipse", "selRing", "selRect", "window", "|", "list", "table", "|", "newLoad"]}
          active={["list", "table"]}
        />
        <label className="relative mx-[2px] flex shrink-0">
          <select aria-label="Load case" className="h-[19px] w-[216px] appearance-none border border-[#9c9c9c] bg-[#f0f0f0]" />
          <svg className="pointer-events-none absolute right-1 top-2 h-[3px] w-[5px]" viewBox="0 0 5 3"><path d="M0 0H5L2.5 3Z" fill="#707070" /></svg>
        </label>
        <Tools items={["prev", "next", "showLoads", "loadValues", "showResults", "resultValues", "|", "glasses", "abacus", "abacusOff"]} />
      </ToolBar>
      <ToolBar className="w-[297px] shrink-0">
        <Tools
          items={["grid", "snap", "planeXY", "planeYZ", "planeXZ", "gridLines", "axes", "|", "copy", "rotate", "mirror", "nodesX", "info", "film"]}
          active={["planeXY"]}
        />
      </ToolBar>
      <ToolBar className="min-w-0 flex-1">
        <Tools items={["module", "moduleCut"]} />
      </ToolBar>
    </div>
    <div className="flex h-[26px] gap-[2px] overflow-hidden">
      <ToolBar className="shrink-0">
        <Tools items={["node", "v", "line", "member", "v", "polyline", "v", "|", "nodalSupport", "lineSupport", "surface", "|", "dimension", "v", "comment", "guides", "|", "rectSurface", "v", "opening", "v", "foldSurface", "v", "solid", "block", "v", "|", "combo", "v", "pointLoad", "lineLoad", "memberLoad", "surfaceLoad", "solidLoad", "v"]} />
      </ToolBar>
      <ToolBar className="shrink-0">
        <Tools items={["pan", "zoomWindow", "zoomOff", "cube", "cubes", "|", "viewX", "viewY", "viewZ", "viewNegX", "v", "render", "v", "|", "solidView", "v"]} />
      </ToolBar>
      <ToolBar className="min-w-0 flex-1">
        <Tools items={["deformed", "gadget", "|", "diagram", "isoSurface", "isoSolid", "reactions", "section", "panels", "v", "diagramSmooth", "resultTable", "|"]} />
      </ToolBar>
    </div>
  </div>
);

/* ---------- project navigator ---------- */

const badges: Record<string, ReactNode> = {
  node: <B x={7} y={7} w={2} />,
  line: <g><L d="M4 12 12 5" /><B x={3} y={11} w={2} /><B x={11} y={4} w={2} /></g>,
  material: <g><B x={4} y={5} w={4} h={7} f="#3c70c8" /><B x={8} y={8} w={4} h={4} f="#d02828" /><B x={5} y={9} w={3} f="#38a048" /></g>,
  surface: <path d="M4 9 8 6 12 7.500 8 11Z" fill="#4878c0" stroke="#284878" strokeWidth=".6" />,
  solid: <path d="M4 6 7 4 12 5V10L9 12 4 11Z" fill="#5888c8" stroke="#284878" strokeWidth=".8" />,
  opening: <g><B x={4} y={5} w={8} h={7} f="#5888d0" c="#305090" /><B x={6.5} y={7} w={3} f="#fff" /></g>,
  nodalSupport: <g><path d="M8 6 12 12H4Z" fill="#2c8c38" /><B x={7} y={4} w={2} /></g>,
  lineSupport: <g><L d="M4 6.5H12" c="#c02020" /><path d="M5 8 7 11H3ZM11 8 13 11H9Z" fill="#2c8c38" /></g>,
  surfaceSupport: <g><path d="M3 7 8 4 13 7 8 9Z" fill="#3868a8" /><path d="M4 8 8 12 12 8Z" fill="#2c7c38" /></g>,
  hinge: <path d="M4 9 7 7 9 8 12 7.500 12 9.500 8 11Z" fill="#e4e4ec" stroke="#8888a0" strokeWidth=".8" />,
  ortho: <g><path d="M4 7 8 5.500 12 7 8 9Z" fill="#c03050" /><path d="M4 8 8 10 12 8 8 12Z" fill="#3868c8" /></g>,
  section: <g><path d="M6 5 12 3V10L6 12Z" fill="#6088e0" /><L d="M4 5.5H8M5 5V12M3 12H8" c="#c02848" w={1.4} /></g>,
  memberHinge: <g><L d="M4 8H12" c="#888" w={1.5} /><path d="M4 5.500 7 8 4 10.500Z" fill="#a03020" /></g>,
  eccentric: <g><L d="M4 10 9 5 12 6 7 11Z" c="#808080" w={1.2} /><B x={11} y={9} w={2} /></g>,
  division: <g><L d="M4 12 12 5" w={1.8} /><B x={3} y={11} w={2} /><B x={7} y={7} w={2} f="#888" /></g>,
  member: <L d="M4 12 12 5" c="#888" w={2} />,
  foundation: <g><B x={4} y={7} w={8} h={4} f="#389048" /><B x={3} y={6} w={2} /><B x={11} y={6} w={2} /></g>,
  nonlinear: <g><L d="M8 4V12" w={1.5} /><B x={7} y={4} w={2} /><B x={7} y={10} w={2} /></g>,
  sets: <g><L d="M4 11 10 5 12 11M6 9 11 9" c="#666" w={1.3} /><B x={9} y={4} w={2} /><B x={3} y={10} w={2} /></g>,
  intersect: <g><circle cx="8" cy="8" r="3.5" fill="#4878b8" /><B x={7} y={6} w={3} f="#a8d0f0" /></g>,
  mesh: <g><B x={4} y={4} w={8} h={8} f="#98a8c0" c="#384868" /><L d="M4 8h8M8 4v8" c="#384868" /></g>,
  release: <g><path d="M2 8 7 9 13 6V9L8 12 2 11Z" fill="#4888c8" /><path d="M2 5 7 6 13 4V6L8 8 2 7Z" fill="#88b8e0" /></g>,
  constraint: <g><L d="M4 5 12 12M12 5 4 12" c="#c02020" w={1.5} /><B x={3} y={4} w={2} /><B x={11} y={4} w={2} /><B x={3} y={11} w={2} /><B x={11} y={11} w={2} /></g>,
};

const TreeIcon = ({ kind }: { kind: string }) => {
  let art: ReactNode;
  if (kind === "project")
    art = (
      <g>
        <path d="M3 .5H10L13.5 4V15.5H3Z" fill="#e8eaee" stroke="#6c7078" />
        <L d="M7 6.5h5M7 8.5h5M7 10.5h5M7 12.5h5" c="#888" />
        <path d="M-1 6 3 2 9 3 7 10 4 11Z" fill="#5078b0" stroke="#385880" strokeWidth=".7" />
      </g>
    );
  else if (kind === "open")
    art = (
      <g stroke="#8a7410" strokeWidth=".9">
        <path d="M2 3H6L7 2H12.500L14.5 4V13H3Z" fill="#c8a818" />
        <path d="M0 5.5H10.500L13.500 13.5H3Z" fill="#dcc02c" />
      </g>
    );
  else if (kind === "loadCase")
    art = (
      <g>
        <DownArrow x={11} y={4} />
        <L d="M-1 13.5H14" w={1.3} />
      </g>
    );
  else if (kind === "loadCombo" || kind === "resultCombo")
    art = (
      <g>
        <B x={-1.5} y={0.5} w={5} h={3} f="#fff" c="#444" />
        <B x={-1.5} y={11.5} w={5} h={3} f="#fff" c="#444" />
        <L d="M5 2Q10 2 11 5M5 13Q10 13 11 10" />
        <B x={9} y={6} w={5} h={3.5} f={kind === "loadCombo" ? "#28b838" : "#4888e0"} c="#284058" />
      </g>
    );
  else
    art = (
      <g>
        <path d="M0.5 3.5 1 2.5H5L6.5 3.5H13.5V13.5H0.5Z" fill="url(#folder)" stroke="#9a8420" />
        <g transform="translate(-1 0)">{badges[kind]}</g>
      </g>
    );
  return (
    <svg className="size-4 shrink-0 overflow-visible" viewBox="0 0 16 16" aria-hidden="true">
      {art}
    </svg>
  );
};

interface TreeRow {
  level: number;
  label: string;
  icon: string;
  sign?: "+" | "-";
  last?: boolean;
}

const row = (level: number, label: string, icon = "folder", sign?: "+" | "-", last?: boolean): TreeRow => ({
  level,
  label,
  icon,
  sign,
  last,
});

const tree: TreeRow[] = [
  row(0, "Stahlbetongebäude* [Desktop]", "project", "-", true),
  row(1, "Model Data", "open", "-"),
  row(2, "Nodes", "node", "+"),
  row(2, "Lines", "line", "+"),
  row(2, "Materials", "material", "+"),
  row(2, "Surfaces", "surface", "+"),
  row(2, "Solids", "solid"),
  row(2, "Openings", "opening", "+"),
  row(2, "Nodal Supports", "nodalSupport", "+"),
  row(2, "Line Supports", "lineSupport", "+"),
  row(2, "Surface Supports", "surfaceSupport"),
  row(2, "Line Hinges", "hinge"),
  row(2, "Variable Thicknesses", "surface"),
  row(2, "Orthotropic Surfaces and Membranes", "ortho"),
  row(2, "Cross-Sections", "section", "+"),
  row(2, "Member Hinges", "memberHinge", "+"),
  row(2, "Member Eccentricities", "eccentric", "+"),
  row(2, "Member Divisions", "division"),
  row(2, "Members", "member", "+"),
  row(2, "Ribs", "hinge"),
  row(2, "Member Elastic Foundations", "foundation"),
  row(2, "Member Nonlinearities", "nonlinear"),
  row(2, "Sets of Members", "sets"),
  row(2, "Intersections of Surfaces", "intersect"),
  row(2, "FE Mesh Refinements", "mesh", "+"),
  row(2, "Nodal Releases"),
  row(2, "Line Release Types"),
  row(2, "Line Releases", "hinge"),
  row(2, "Surface Release Types", "release"),
  row(2, "Surface Releases", "release"),
  row(2, "Connection of Two Members"),
  row(2, "Joints"),
  row(2, "Nodal Constraints", "constraint", undefined, true),
  row(1, "Load Cases and Combinations", "open", "-"),
  row(2, "Load Cases", "loadCase"),
  row(2, "Load Combinations", "loadCombo"),
  row(2, "Result Combinations", "resultCombo", undefined, true),
  row(1, "Loads"),
  row(1, "Results"),
];

const Guide = ({ d, sign }: { d: string; sign?: string }) => (
  <svg className="h-[18px] w-[19px] shrink-0 overflow-visible" viewBox="0 0 19 18" aria-hidden="true">
    <path d={d} fill="none" stroke="#707070" strokeDasharray="1 1" />
    {sign && (
      <g>
        <rect x="5.5" y="6.5" width="8" height="8" rx="1" fill="#fdfdfd" stroke="#8c8c8c" />
        <path d={sign === "+" ? "M7 10.5H12M9.5 8V13" : "M7 10.5H12"} stroke="#284890" />
      </g>
    )}
  </svg>
);

const Tree = () => (
  <ul className="min-w-0 flex-1 overflow-hidden pl-[2px] text-[12px] text-black">
    {tree.map(({ level, label, icon, sign, last }) => {
      const own = `M9.5 0V${last ? 10 : 18}M10 10.5H21`;
      return (
        <li key={label} className="flex h-[18px] items-center whitespace-nowrap">
          {level > 0 && <Guide d="" />}
          {level > 1 && <Guide d="M9.5 0V18" />}
          {sign ? (
            <button type="button" aria-label={sign === "+" ? "Expand" : "Collapse"}>
              <Guide d={own} sign={sign} />
            </button>
          ) : (
            <Guide d={own} />
          )}
          <span className="ml-[3px]">
            <TreeIcon kind={icon} />
          </span>
          <span className={clsx("ml-[3px]", level === 0 && "font-bold")}>{label}</span>
        </li>
      );
    })}
  </ul>
);

const Chevron = ({ dir }: { dir: "up" | "down" | "left" | "right" }) => {
  const d = {
    up: "M1 6 4.5 2.5 8 6",
    down: "M1 3 4.5 6.5 8 3",
    left: "M6 1 2.5 4.5 6 8",
    right: "M3 1 6.5 4.5 3 8",
  }[dir];
  return (
    <button type="button" aria-label={`Scroll ${dir}`} className="flex size-[17px] shrink-0 items-center justify-center">
      <svg className="size-[9px]" viewBox="0 0 9 9"><path d={d} fill="none" stroke="#505050" strokeWidth="1.8" /></svg>
    </button>
  );
};

const PanelButtons = () => (
  <div className="flex gap-[9px] text-[#5c6068]">
    <button type="button" aria-label="Pin">
      <svg className="size-[9px]" viewBox="0 0 9 9"><path d="M2.5 0V5M6.5 0V5M2 .5H7M1 5.5H8M4.5 6V9M5.5 0V5" fill="none" stroke="currentColor" /></svg>
    </button>
    <button type="button" aria-label="Close">
      <svg className="size-[9px]" viewBox="0 0 9 9"><path d="M1 1 8 8M8 1 1 8" fill="none" stroke="currentColor" strokeWidth="1.3" /></svg>
    </button>
  </div>
);

const Navigator = () => (
  <aside className="flex w-[318px] shrink-0 flex-col bg-[#cfd3dc]">
    <div className="mr-1 flex h-[21px] shrink-0 items-center justify-between border-t border-[#e4e8f0] bg-[#b9bfca] pl-1 pr-[6px] text-[12px] text-[#454a55]">
      <h2>Project Navigator - Data</h2>
      <PanelButtons />
    </div>
    <div className="mr-1 flex min-h-0 flex-1 flex-col border-b-2 border-[#8a8e98] bg-[#eceff6] p-[3px] pt-[2px]">
      <div className="flex min-h-0 flex-1 flex-col border border-b-0 border-[#8a8e98] bg-[#fdfdf5]">
        <div className="flex min-h-0 flex-1">
          <Tree />
          <div className="flex w-4 shrink-0 flex-col items-center bg-[#f0f0f0]">
            <Chevron dir="up" />
            <span className="mt-[6px] h-[230px] w-full bg-[#cdcdcd]" />
            <span className="flex-1" />
            <Chevron dir="down" />
          </div>
        </div>
        <div className="flex h-[16px] shrink-0 items-center bg-[#f0f0f0]">
          <Chevron dir="left" />
          <span className="h-full w-[116px] bg-[#cdcdcd]" />
          <span className="flex-1" />
          <Chevron dir="right" />
          <span className="w-4" />
        </div>
      </div>
    </div>
    <div className="flex h-[24px] shrink-0 items-start gap-2 pl-1 text-[12px] text-[#454a55]">
      <button type="button" className="flex h-[21px] items-center gap-[3px] rounded-sm border border-t-0 border-[#b8e8f0] bg-[#eef1f7] px-[2px]">
        <svg className="size-4" viewBox="0 0 16 16" aria-hidden="true">
          <B x={4} y={1} w={12} h={3} f="#3c68c8" />
          <B x={4.5} y={4} w={11} h={7} f="#fff" c="#88a0c8" />
          <path d="M0 5H7V12H0Z" fill="#f4d030" stroke="#a08010" strokeWidth=".8" />
          <circle cx="9" cy="9" r="3.5" fill="#d8e8f8" stroke="#505860" strokeWidth="1.3" />
          <L d="M11.5 11.5 15 15.5" c="#a07838" w={2} />
        </svg>
        Data
      </button>
      <button type="button" className="flex h-[21px] items-center gap-[3px]">
        <svg className="size-4" viewBox="0 0 16 16" aria-hidden="true">
          <B x={1.5} y={3.5} w={12} h={12} f="#fff" c="#2c58b8" />
          <B x={1} y={3} w={13} h={3} f="#3c68c8" />
          <L d="M3 8.5h9M3 10.5h9M3 12.5h9" c="#4870c8" />
          <path d="M4 3Q8 0 15 1V5Q10 6 9 7L5 6Z" fill="#a88c70" stroke="#58483a" strokeWidth=".7" />
        </svg>
        Display
      </button>
      <button type="button" className="ml-1 flex h-[21px] items-center gap-[1px]">
        <svg className="size-4" viewBox="0 0 16 16" aria-hidden="true">
          <path d="M5 8 11 1 14 3 11 10 14 15H1V13L9 12Z" fill="#3864c8" />
          <path d="M5 9 10 3" stroke="#a8c0f0" strokeWidth="1.5" />
        </svg>
        Views
      </button>
    </div>
  </aside>
);

/* ---------- work area ---------- */

const Cone = ({ x, y }: { x: number; y: number }) => (
  <path
    transform={`translate(${x} ${y})`}
    d="M-2 -4H2L3 -1 7 2Q7 4 4 4H-4Q-8 4 -7 2L-3 -1Z"
    fill="#3ce844"
    stroke="#2cc834"
    strokeWidth=".6"
  />
);

const Model = () => (
  <svg className="h-full w-full" viewBox="320 109 880 532" role="img" aria-label="Model">
    <defs>
      <linearGradient id="drum">
        <stop offset="0" stopColor="#b4b4b4" />
        <stop offset=".18" stopColor="#afafaf" />
        <stop offset=".36" stopColor="#9b9b9b" />
        <stop offset=".44" stopColor="#9c9c9c" />
        <stop offset=".7" stopColor="#aaa" />
        <stop offset="1" stopColor="#b0b0b0" />
      </linearGradient>
      <linearGradient id="column">
        <stop offset="0" stopColor="#6a6af4" />
        <stop offset=".25" stopColor="#7474ff" />
        <stop offset=".5" stopColor="#6464f0" />
        <stop offset=".7" stopColor="#5050d4" />
        <stop offset="1" stopColor="#6c6cfa" />
      </linearGradient>
    </defs>
    <path d="M557 265V398L867 444V330Z" fill="#cbcbcb" />
    <path d="M376 244H372V475L376 476Z" fill="#c6c6c6" />
    <path d="M376 253V477H382L557 398V278Z" fill="#b2b2b2" />
    <path d="M377 262V475L381 473V262Z" fill="#c0c0c0" />
    <path d="M376.5 246V476" stroke="#000" />
    <path d="M557.5 280V398" stroke="#a4a4a4" />
    <path d="M376 476 556 396" stroke="#f01818" strokeWidth="1.3" />

    <ellipse cx="472.5" cy="321" rx="12" ry="30" fill="#bdbdbd" transform="rotate(5 472 321)" />
    <ellipse cx="471" cy="321.5" rx="12" ry="29.5" fill="#0c8484" transform="rotate(5 471 321)" />
    <ellipse cx="469.5" cy="321.5" rx="11.5" ry="29" fill="#a0a0a0" stroke="#111" transform="rotate(5 469 321)" />
    <ellipse cx="465" cy="321.5" rx="10.5" ry="28.5" fill="#b2b2b2" transform="rotate(5 465 321)" />
    <ellipse cx="466" cy="321" rx="9.5" ry="28" fill="#fff" transform="rotate(5 466 321)" />
    <path d="M458 299Q447 322 453 345" fill="none" stroke="#2c9494" strokeDasharray="5 1" />
    <path d="M463.5 321.5h5M466 318v7" stroke="#666" />

    <path d="M866 316V550C975 553 1091 533 1091 503V270Z" fill="url(#drum)" />
    <path d="M555 161 1046 234C1072 241 1091 256 1091 271 1090 300 985 323 866 320L376 245V240.5Z" fill="#707070" />
    <path d="M376 240.5 866 314C985 316 1083 290 1085 265L1086 270C1083 298 985 321 866 319V326L376 253Z" fill="#c6c6c6" />
    <path d="M866 314C985 316 1083 290 1085 265L1086 270C1083 298 985 321 866 319Z" fill="#a4a4a4" />
    <path d="M376 247 866 319C985 321 1083 298 1086 267" fill="none" stroke="#000" strokeWidth="1.1" />

    <path d="M376 253 866 325V343L376 270Z" fill="#7474fc" />
    <path d="M375 253.5 866 325.5" stroke="#3c3c98" strokeWidth="2" />
    <path d="M375 269.5 866 342.5" stroke="#3c3ca8" strokeWidth="1.3" />
    <path d="M676 293H694L696 300V450H676Z" fill="url(#column)" />

    <path d="M695 252 755 226 856 242 798 267.5Z" fill="#b8b8b8" />
    <path d="M704 253.5 757 232 849 244.5 798 267.5Z" fill="#adadad" />
    <path d="M713 254 756 233 848 245 798 267.5Z" fill="#cdcdcd" />
    <path d="M704 253.5 755 231 850 245" fill="none" stroke="#111" />
    <path d="M752 229 851 243.5" stroke="#0c8484" strokeWidth="2" />

    <path d="M867 549C970 551 1085 530 1085 499 1085 488 1066 476 1046 469" fill="none" stroke="#f01818" strokeWidth="1.3" />
    {[[380, 261], [686, 296], [863, 333]].map(([x, y]) => (
      <circle key={x} cx={x} cy={y} r="2.5" fill="#fff" stroke="#108080" />
    ))}
    {[[399, 472], [444, 452], [489, 432], [533, 412], [924, 554], [1024, 542], [1081, 517]].map(([x, y]) => (
      <Cone key={x} x={x} y={y} />
    ))}
  </svg>
);

const DIALOG_BUTTON = "h-[22px] w-[59px] rounded-[3px] border border-[#a4a4ac] bg-[#fefee4]";

const LineSupportDialog = () => (
  <form className="absolute left-[210px] top-[336px] w-[275px] rounded-lg border border-black bg-[#ffffe1] px-[6px] pb-[9px] pt-[6px] text-[11px] leading-4 text-black">
    <div className="flex">
      <svg className="ml-[4px] mt-[1px] h-[31px] w-6" viewBox="0 0 24 31" aria-hidden="true">
        <path d="M2 1 8 8M8 1 2 8" stroke="#901890" strokeWidth="2" />
        <path d="M8 6V25L12 21 15 28 19.5 26.500 16.5 20H22Z" fill="#fff" stroke="#000" strokeWidth="2" />
      </svg>
      <div className="ml-[14px] h-[57px]">
        <h2 className="text-[12px] font-bold">Line Support</h2>
        <p>Select Lines</p>
      </div>
    </div>
    <label htmlFor="selected" className="block">Selected:</label>
    <input id="selected" defaultValue="12,15" className="mt-[1px] block h-[18px] w-full border border-[#606060] bg-white px-[1px]" />
    <div className="mt-2 flex gap-[11px] border-t border-[#9c9ca4] pt-[7px]">
      <button type="button" className={DIALOG_BUTTON}>Clear</button>
      <span className="flex-1" />
      <button type="button" className={DIALOG_BUTTON}>OK</button>
      <button type="button" className={DIALOG_BUTTON}>Cancel</button>
    </div>
  </form>
);

/* ---------- line supports table ---------- */

const sheetTools = [
  "sheetEdit", "sheetInsert", "sheetLoad", "sheetDiagram", "sheetWave", "|",
  "sheetPrev", "sheetNext", "|",
  "syncOut", "syncIn", "sync", "|",
  "addRow", "mulRow", "divRow", "|",
  "clearRow", "|",
  "deleteRow", "rowLeft", "rowRight", "|",
  "yellowTable", "blueTable", "|",
  "highlight", "|",
  "settings", "glasses", "excel", "calc", "|",
  "rename", "fx", "fxOff",
];

const letters = ["A", "B", "C", "D", "E", "F", "G", "H", "I", "J", "K"];
const checks = [false, true, true, true, false, false, true];
const checkNames = ["Wall in Z", "Cux", "Cuy", "Cuz", "φx", "φy", "φz"];

const HEAD = "border-r border-[#a0a0a0] bg-[#f0f0f0] p-0 font-normal";
const CELL = "border-b border-r border-[#a0a0a0] p-0";
const ROW_HEAD = "border-b border-r border-[#707070] p-0 font-normal shadow-[inset_1px_1px_0_#fff]";

const Check = ({ on, label }: { on: boolean; label: string }) => (
  <span className="relative mx-auto block size-[11px]">
    <input
      type="checkbox"
      aria-label={label}
      defaultChecked={on}
      className="peer block size-[11px] appearance-none border border-black bg-white shadow-[1px_1px_0_#000]"
    />
    <svg className="pointer-events-none absolute inset-0 hidden size-[11px] peer-checked:block" viewBox="0 0 11 11">
      <path d="M2.5 5.500 4.5 7.500 8.5 3" fill="none" stroke="#000" strokeWidth="1.8" />
    </svg>
  </span>
);

const SupportTable = () => (
  <table className="w-[887px] table-fixed border-separate border-spacing-0 border-l border-t border-[#707070] text-center leading-[14px]">
    <colgroup>
      <col className="w-[45px]" />
      <col className="w-[162px]" />
      <col className="w-[60px]" />
      <col className="w-[60px]" />
      <col className="w-[60px]" />
      <col className="w-[72px]" />
      <col className="w-[72px]" />
      <col className="w-[72px]" />
      <col className="w-[72px]" />
      <col className="w-[72px]" />
      <col className="w-[72px]" />
      <col />
    </colgroup>
    <thead>
      <tr className="h-[13px] leading-[12px]">
        <th rowSpan={3} className="border-b border-r border-[#707070] bg-[#e2e2e2] p-0 font-normal leading-[13px]">
          Support
          <br />
          No.
        </th>
        {letters.map((letter) => (
          <th
            key={letter}
            className={clsx(
              "border-b border-r border-[#707070] p-0 font-normal",
              letter === "A" ? "bg-[#0078d7] text-white" : "bg-[#e2e2e2] shadow-[inset_1px_1px_0_#fff]"
            )}
          >
            {letter}
          </th>
        ))}
      </tr>
      <tr className="h-4">
        <th className={HEAD} />
        <th className={HEAD}>Reference</th>
        <th className={HEAD}>Rotation</th>
        <th className={HEAD}>Wall</th>
        <th className={HEAD} colSpan={3}>Support or Spring [MN/m²]</th>
        <th className={clsx(HEAD, "whitespace-nowrap")} colSpan={3}>Rotational Restraint or Spring [MNm/rad/m]</th>
        <th className={HEAD} />
      </tr>
      <tr className="h-4">
        <th className={clsx(HEAD, "border-b")}>On Lines No.</th>
        <th className={clsx(HEAD, "border-b")}>System</th>
        <th className={clsx(HEAD, "border-b")}>β [°]</th>
        <th className={clsx(HEAD, "border-b")}>in Z</th>
        {["ux", "uy", "uz"].map((s) => (
          <th key={s} className={clsx(HEAD, "border-b")}>
            C<span className="relative top-[2px] ml-[1px] text-[10px]">{s}</span>
          </th>
        ))}
        {["x", "y", "z"].map((s) => (
          <th key={s} className={clsx(HEAD, "border-b")}>
            φ<span className="relative top-[2px] text-[10px]">{s}</span>
          </th>
        ))}
        <th className={clsx(HEAD, "border-b pl-[9px] text-left")}>Comment</th>
      </tr>
    </thead>
    <tbody>
      <tr className="h-4 bg-[#ececec]">
        <th className={clsx(ROW_HEAD, "bg-[#0078d7] text-white")}>1</th>
        <td className="border border-black p-0">
          <div className="flex items-center">
            <input aria-label="On Lines No." defaultValue="12,15_" className="h-[14px] min-w-0 flex-1 bg-transparent pl-[3px]" />
            <button type="button" aria-label="Pick lines" className="h-[13px] w-[12px] bg-[#dde0e8]">
              <svg className="h-3 w-[10px]" viewBox="0 0 10 12"><path d="M2 1V10L4 8 6 11.5 7.5 10.5 6 7.5H9Z" fill="#fff" stroke="#6070a0" /></svg>
            </button>
          </div>
        </td>
        <td className={clsx(CELL, "pl-1 text-left")}><u>L</u>ocal</td>
        <td className={clsx(CELL, "pr-1 text-right")}>0.00</td>
        {checks.map((on, i) => (
          <td key={i} className={CELL}>
            <Check on={on} label={checkNames[i]} />
          </td>
        ))}
        <td className={CELL} />
      </tr>
      {[2, 3, 4].map((n) => (
        <tr key={n} className="h-4 bg-white">
          <th className={clsx(ROW_HEAD, "bg-[#e2e2e2]")}>{n}</th>
          {letters.map((letter) => (
            <td key={letter} className={clsx(CELL, letter === "K" && "bg-[#f0f0f0]")} />
          ))}
        </tr>
      ))}
    </tbody>
  </table>
);

const tabs = [
  "Nodes", "Lines", "Materials", "Surfaces", "Solids", "Openings", "Nodal Supports",
  "Line Supports", "Surface Supports", "Line Hinges", "Cross-Sections", "Member Hinges",
];

const TablePanel = () => (
  <section className="flex shrink-0 flex-col border-t-4 border-[#cfd3dc] bg-[#f0f0f0]">
    <div className="border-b border-[#606468] bg-linear-to-b from-[#eaeef7] to-[#cfd3dc]">
      <div className="flex h-[21px] items-center justify-between pl-1 pr-[2px] text-[12px] text-[#454a55]">
        <h2>1.8 Line Supports</h2>
        <PanelButtons />
      </div>
      <div className="flex h-6 items-center overflow-hidden pl-[9px]">
        <Tools items={sheetTools} active={["sheetEdit", "syncOut", "syncIn"]} />
      </div>
    </div>
    <div className="text-[11px] text-black">
      <div className="flex h-[131px] pt-1">
        <div className="ml-[3px] min-w-0 flex-1 overflow-hidden">
          <SupportTable />
        </div>
        <div className="flex h-[112px] w-[17px] flex-col border-r border-[#909090]">
          <Chevron dir="up" />
          <span className="flex-1 bg-[#cdcdcd]" />
          <Chevron dir="down" />
        </div>
      </div>
      <div className="flex h-[17px] items-center border-b border-[#a0a0a0]">
        <Chevron dir="left" />
        <span className="mx-[3px] h-full flex-1 bg-[#cdcdcd]" />
        <span className="w-[22px]" />
        <Chevron dir="right" />
      </div>
      <div className="mt-1 flex h-[17px] items-start border-t border-[#606060]">
        {tabs.map((tab) => (
          <button
            key={tab}
            type="button"
            className={clsx(
              "h-4 whitespace-nowrap rounded-b-[3px] border-b border-r border-[#606060] px-1 leading-[15px]",
              tab === "Line Supports" ? "bg-[#fafafa]" : "bg-[#e2e2e2]"
            )}
          >
            {tab}
          </button>
        ))}
        <span className="flex-1" />
        {["M2 1V8M8 1V8L4 4.5Z", "M7 1V8L3 4.5Z", "M3 1V8L7 4.5Z", "M8 1V8M2 1V8L6 4.5Z"].map((d, i) => (
          <button
            key={d}
            type="button"
            aria-label={["First tab", "Previous tab", "Next tab", "Last tab"][i]}
            className="flex h-[15px] w-4 items-center justify-center border-b border-r border-[#808080] bg-[#f0f0f0] shadow-[inset_1px_1px_0_#fff]"
          >
            <svg className="size-[9px]" viewBox="0 0 10 9">
              <path d={d} fill={i < 2 ? "#a0a0a0" : "#000"} stroke={i < 2 ? "#a0a0a0" : "#000"} />
            </svg>
          </button>
        ))}
      </div>
    </div>
    <p className="h-[20px] border-b border-[#a0a0a0] pl-[2px] text-[12px] leading-[21px] text-black">
      List of supported lines (e.g. '1,3,5-7')
    </p>
  </section>
);

const snapModes: [string, boolean, string][] = [
  ["SNAP", true, "w-[35px]"],
  ["GRID", false, "w-[35px]"],
  ["CARTES", true, "w-[50px]"],
  ["OSNAP", true, "w-[44px]"],
  ["GLINES", false, "w-[45px]"],
  ["DXF", true, "w-[29px]"],
];

const StatusBar = () => (
  <footer className="flex h-5 shrink-0 items-center bg-linear-to-b from-[#d2d5dc] via-[#a8adb8] to-[#bcc0ca] text-[11px] text-[#26282e]">
    <span className="w-[441px] shrink-0 pl-1">Select Lines</span>
    <div className="flex flex-1 gap-[2px]">
      {snapModes.map(([name, on, width]) => (
        <button
          key={name}
          type="button"
          className={clsx("h-[17px] border-l border-t text-[12px] leading-4", width, on ? "border-black border-r border-r-[#e8eaf0]" : "border-[#e8eaf0] border-r border-r-[#808490]")}
        >
          {name}
        </button>
      ))}
    </div>
    {["w-[88px]", "w-[74px]", "w-[74px]", "w-[88px]"].map((w, i) => (
      <span key={i} className={clsx("h-[17px] border-l border-[#90949e]", w)} />
    ))}
  </footer>
);

export default function App() {
  return (
    <div className={clsx("flex h-screen flex-col overflow-hidden bg-[#cfd3dc]", UI)}>
      <svg className="absolute size-0" aria-hidden="true">
        <defs>
          <linearGradient id="folder" x2="1" y2="1">
            <stop offset="0" stopColor="#fdf4a0" />
            <stop offset="1" stopColor="#e4bc1c" />
          </linearGradient>
        </defs>
      </svg>
      <TitleBar />
      <MenuBar />
      <ToolRows />
      <div className="flex min-h-0 flex-1">
        <Navigator />
        <main className="flex min-w-0 flex-1 flex-col">
          <div className="relative min-h-0 flex-1 border-l-2 border-t-2 border-[#707070] bg-white">
            <Model />
            <LineSupportDialog />
          </div>
          <TablePanel />
        </main>
      </div>
      <StatusBar />
    </div>
  );
}
